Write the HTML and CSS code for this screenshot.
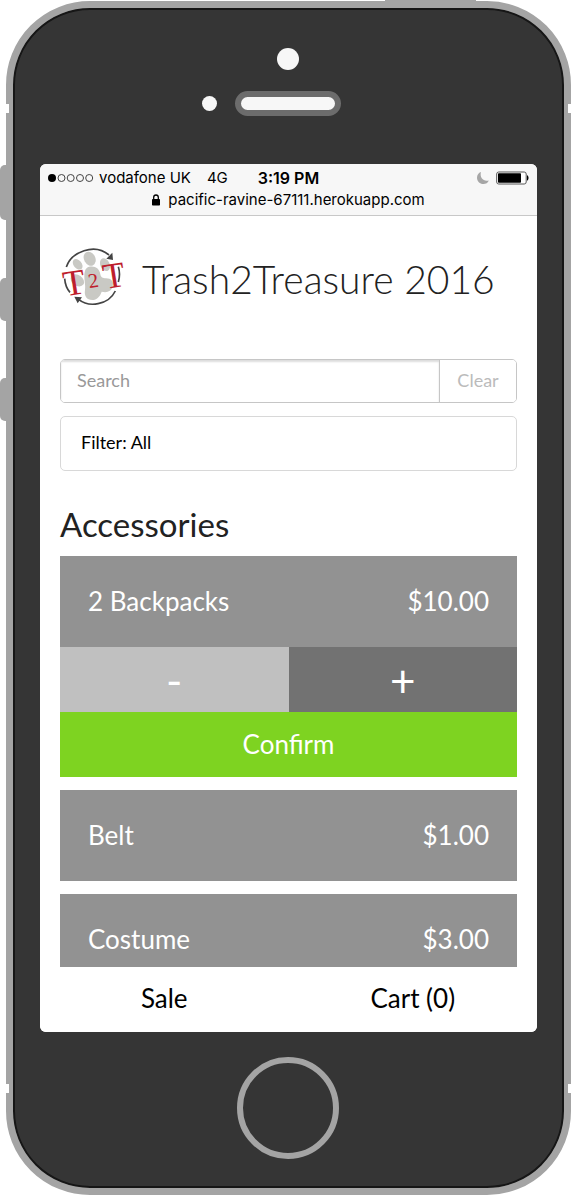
FILE: index.html
```html
<!DOCTYPE html>
<html lang="en">
<head>
<meta charset="utf-8">
<meta name="viewport" content="width=device-width, initial-scale=1">
<title>Trash2Treasure 2016</title>
<link rel="stylesheet" href="styles.css">
</head>
<body>
<div class="stage">
  <span class="side-button side-power"></span>
  <span class="side-button side-mute"></span>
  <span class="side-button side-up"></span>
  <span class="side-button side-down"></span>
  <div class="phone">
    <span class="notch notch-left notch-high"></span>
    <span class="notch notch-right notch-high"></span>
    <span class="notch notch-left notch-low"></span>
    <span class="notch notch-right notch-low"></span>
    <div class="bezel bezel-top">
      <span class="camera"></span>
      <div class="speaker-row"><span class="sensor"></span><span class="speaker"></span></div>
    </div>
    <div class="screen">
      <header class="status">
        <div class="status-row">
          <div class="carrier">
            <svg class="signal" width="46" height="10" viewBox="0 0 46 10" aria-hidden="true">
              <circle cx="4" cy="5" r="4"/>
              <g fill="none" stroke="#444" stroke-width="1"><circle cx="13.500" cy="5" r="3.500"/><circle cx="22.700" cy="5" r="3.500"/><circle cx="32" cy="5" r="3.500"/><circle cx="41.200" cy="5" r="3.500"/></g>
            </svg>
            <span>vodafone UK</span><span class="network">4G</span>
          </div>
          <time class="clock">3:19 PM</time>
          <div class="battery-group">
            <svg width="14" height="14" viewBox="0 0 14 14" aria-hidden="true"><path d="M5 1C2.500 1.800 1 4 1 6.700 1 10.200 3.800 13 7.300 13c2.600 0 4.700-1.400 5.500-3.600-4.800 1.700-9.500-2.700-7.800-8.400z" fill="#a6a6a6"/></svg>
            <svg width="33" height="14" viewBox="0 0 33 14" aria-hidden="true"><rect x=".700" y="1" width="29.500" height="12" rx="2" fill="#fff" stroke="#555"/><rect x="2" y="2.300" width="23" height="9.400" rx=".8"/><path d="M31 4.300c2 .5 2 4.900 0 5.400z"/></svg>
          </div>
        </div>
        <div class="address">
          <svg width="8" height="12" viewBox="0 0 8 12" aria-hidden="true"><rect x="0" y="5" width="8" height="6.500" rx=".8"/><path d="M1.700 5.500V3.300a2.300 2.300 0 0 1 4.600 0v2.200" fill="none" stroke="#000" stroke-width="1.300"/></svg>
          <span>pacific-ravine-67111.herokuapp.com</span>
        </div>
      </header>
      <main class="content">
        <div class="brand">
          <svg class="logo" width="64" height="60" viewBox="60 48 192 180" role="img" aria-label="T2T paw logo">
            <g fill="#c9c9c4">
              <ellipse cx="149" cy="86" rx="17" ry="22" transform="rotate(-28 149 86)"/>
              <ellipse cx="113" cy="103" rx="12" ry="18" transform="rotate(-40 113 103)"/>
              <ellipse cx="195" cy="104" rx="14" ry="20" transform="rotate(-25 195 104)"/>
              <ellipse cx="112" cy="151" rx="22" ry="16" transform="rotate(35 112 151)"/>
              <path d="M145 111c20-5 33 4 36 22 2 10 7 12 17 12 16 0 24 10 20 24-4 16-18 20-33 16-5 15-15 25-28 25-17 0-25-12-22-30 2-16-2-25-2-42 0-14 4-24 12-27z"/>
            </g>
            <g fill="none" stroke="#444" stroke-width="5">
              <path d="M79 111C94 66 163 38 207 75M226 183C205 226 146 233 116 208M74 146Q76 172 90 187M235 110Q242 132 235 156"/>
            </g>
            <path d="M199 86l20 4-2-22zM103 200l23 2-13 18z" fill="#444"/>
            <g class="logo-letters">
              <text font-size="108" transform="translate(75 199) rotate(-9)">T</text>
              <text font-size="62" transform="translate(148 175) rotate(-9)">2</text>
              <text font-size="108" transform="translate(194 177) rotate(-9)">T</text>
            </g>
          </svg>
          <h1>Trash2Treasure 2016</h1>
        </div>
        <form class="search" onsubmit="return false">
          <input class="search-input" type="search" placeholder="Search" aria-label="Search">
          <button class="search-clear" type="reset">Clear</button>
        </form>
        <button class="filter" type="button">Filter: All</button>
        <h2>Accessories</h2>
        <ul class="items">
          <li>
            <div class="item"><span>2 Backpacks</span><span>$10.00</span></div>
            <div class="stepper">
              <button class="minus" type="button" aria-label="Remove one">-</button>
              <button class="plus" type="button" aria-label="Add one">+</button>
            </div>
            <button class="confirm" type="button">Confirm</button>
          </li>
          <li><div class="item"><span>Belt</span><span>$1.00</span></div></li>
          <li><div class="item"><span>Costume</span><span>$3.00</span></div></li>
        </ul>
      </main>
      <nav class="tabs"><a href="#sale">Sale</a><a href="#cart">Cart (0)</a></nav>
    </div>
    <div class="bezel bezel-bottom"><button class="home" type="button" aria-label="Home"></button></div>
  </div>
</div>
</body>
</html>
```

FILE: styles.css
```css
* { box-sizing: border-box; }

body {
  margin: 0;
  background: #fff;
  color: #000;
  font-family: Lato, "Open Sans", sans-serif;
}

button, input { font: inherit; }
button { margin: 0; padding: 0; border: 0; border-radius: 0; cursor: pointer; }

/* Device shell */
.stage {
  position: relative;
  height: 100vh;
  min-height: 800px;
  padding: 1px 0 0 6px;
}

.phone {
  position: relative;
  display: flex;
  flex-direction: column;
  height: 100%;
  padding: 0 27px;
  border: 7px solid #a4a4a4;
  border-radius: 84px;
  background: #353535;
  box-shadow: inset 0 0 0 2px #161616;
}

.side-button { position: absolute; background: #a4a4a4; }
.side-power { top: 0; right: 95px; width: 91px; height: 2px; }
.side-mute, .side-up, .side-down {
  left: 0;
  width: 8px;
  height: 43px;
  border-radius: 5px 0 0 5px;
}
.side-mute { top: 165px; height: 55px; }
.side-up { top: 278px; }
.side-down { top: 378px; }

.notch { position: absolute; width: 3px; height: 9px; background: #fff; }
.notch-left { left: -7px; }
.notch-right { right: -7px; }
.notch-high { top: 96px; }
.notch-low { bottom: 95px; }

.bezel {
  display: flex;
  flex: none;
  flex-direction: column;
  align-items: center;
  height: 156px;
  padding-right: 2px;
}
.bezel-top { gap: 21px; padding-top: 40px; }
.bezel-bottom { padding-top: 25px; }

.camera { width: 22px; height: 22px; border-radius: 50%; background: #f7f7f7; }
.speaker-row {
  display: grid;
  grid-template-columns: 1fr auto 1fr;
  align-items: center;
  width: 100%;
}
.sensor {
  justify-self: end;
  width: 15px;
  height: 15px;
  margin-right: 18px;
  border-radius: 50%;
  background: #f7f7f7;
}
.speaker {
  width: 106px;
  height: 25px;
  border: 6px solid #6c6c6c;
  border-radius: 13px;
  background: #f7f7f7;
}
.home {
  width: 102px;
  height: 102px;
  border: 6px solid #a4a4a4;
  border-radius: 50%;
  background: transparent;
}

/* Screen */
.screen {
  display: flex;
  flex: 1;
  flex-direction: column;
  min-height: 0;
  overflow: hidden;
  border-radius: 6px;
  background: #fff;
}

.status {
  flex: none;
  padding: 3px 8px 4px;
  border-bottom: 1px solid #c8c8c8;
  background: #f7f7f7;
  font-family: Inter, "Liberation Sans", sans-serif;
  font-size: 15px;
  line-height: 22px;
}
.status-row { display: grid; grid-template-columns: 1fr auto 1fr; }
.carrier { display: flex; align-items: center; gap: 5px; white-space: nowrap; }
.network { margin-left: 11px; }
.clock { font-size: 16px; font-weight: 600; }
.battery-group { display: flex; align-items: center; justify-content: flex-end; gap: 6px; }
.address { display: flex; align-items: center; justify-content: center; gap: 8px; }

.content {
  flex: 1;
  min-height: 0;
  padding: 30px 20px 0;
  overflow: hidden;
}

.brand { display: flex; align-items: flex-start; gap: 18px; margin-bottom: 47px; }
.logo { flex: none; overflow: visible; }
.logo-letters { fill: #be1e2d; font-family: "Liberation Serif", serif; }

h1, h2 { margin: 0; color: #222; }
h1 { font-size: 39px; font-weight: 300; line-height: 66px; white-space: nowrap; }
h2 { margin-bottom: 14px; font-size: 33px; font-weight: 400; line-height: 36px; }

.search {
  display: flex;
  height: 44px;
  margin-bottom: 13px;
  overflow: hidden;
  border: 1px solid #c6c6c6;
  border-radius: 5px;
}
.search-input {
  flex: 1;
  min-width: 0;
  padding: 0 16px 3px;
  border: 0;
  background: #fff;
  box-shadow: inset 0 2px 2px #ddd;
  font-size: 18px;
  appearance: none;
}
.search-input::placeholder { color: #999; opacity: 1; }
.search-clear {
  width: 77px;
  padding-bottom: 3px;
  border-left: 1px solid #c6c6c6;
  background: #fff;
  color: #bbb;
  font-size: 18px;
}

.filter {
  width: 100%;
  height: 55px;
  margin-bottom: 35px;
  padding: 0 20px 3px;
  border: 1px solid #d8d8d8;
  border-radius: 5px;
  background: #fff;
  color: #000;
  font-size: 18px;
  text-align: left;
}

.items { display: grid; gap: 13px; margin: 0; padding: 0; list-style: none; }
.item {
  display: flex;
  align-items: center;
  justify-content: space-between;
  height: 91px;
  padding: 0 28px 2px;
  background: #929292;
}
.item, .confirm { color: #fff; font-size: 26px; }
.stepper { display: grid; grid-template-columns: 1fr 1fr; height: 65px; }
.minus, .plus { color: #fff; font-size: 44px; line-height: 60px; }
.minus { background: #c0c0c0; }
.plus { background: #727272; }
.confirm { width: 100%; height: 65px; padding-bottom: 2px; background: #7ed321; }

.tabs {
  display: grid;
  flex: none;
  grid-template-columns: 1fr 1fr;
  height: 65px;
  background: #fff;
}
.tabs a {
  display: grid;
  place-items: center;
  padding-bottom: 3px;
  color: #000;
  font-size: 26px;
  text-decoration: none;
}
```
